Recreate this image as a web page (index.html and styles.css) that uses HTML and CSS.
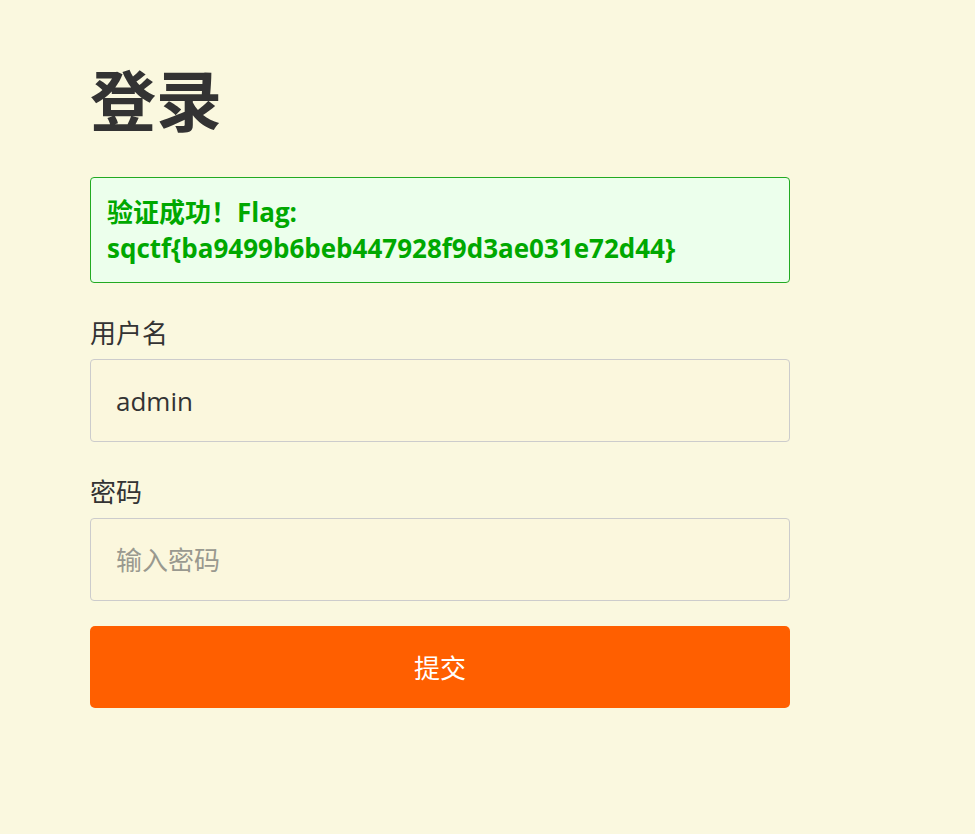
FILE: index.html
```html
<!DOCTYPE html>
<html lang="zh-CN">
<head>
<meta charset="utf-8">
<title>登录</title>
<link rel="stylesheet" href="styles.css">
</head>
<body>
<main class="container">
  <h1 class="title">登录</h1>
  <div class="alert-success">验证成功！Flag: sqctf{ba9499b6beb447928f9d3ae031e72d44}</div>
  <form class="login-form">
    <div class="form-group">
      <label class="form-label" for="username">用户名</label>
      <input class="form-input" id="username" type="text" value="admin">
    </div>
    <div class="form-group">
      <label class="form-label" for="password">密码</label>
      <input class="form-input" id="password" type="password" placeholder="输入密码">
    </div>
    <button class="submit-btn" type="button">提交</button>
  </form>
</main>
</body>
</html>
```

FILE: styles.css
```css
html, body {
  margin: 0;
  padding: 0;
  background: #faf8df;
}
body {
  font-family: "Open Sans", "Noto Sans CJK SC", sans-serif;
  color: #333333;
}
.container {
  width: 700px;
  padding: 62px 0 0 90px;
}
.title {
  margin: 0 0 38px 0;
  font-size: 66px;
  line-height: 77px;
  font-weight: 700;
  color: #333333;
}
.alert-success {
  box-sizing: border-box;
  width: 700px;
  border: 1px solid #22aa22;
  background: #ecffec;
  border-radius: 4px;
  padding: 16px 16px;
  color: #00a800;
  font-weight: 700;
  font-size: 26px;
  line-height: 36px;
}
.login-form {
  display: flex;
  flex-direction: column;
}
.form-group {
  display: flex;
  flex-direction: column;
  margin-top: 32px;
}
.form-label {
  font-size: 26px;
  line-height: 36px;
  margin-bottom: 8px;
  color: #333333;
}
.form-input {
  box-sizing: border-box;
  width: 700px;
  height: 83px;
  padding: 0 25px;
  border: 1px solid #cccccc;
  border-radius: 4px;
  background: #fbf7dd;
  font-family: "Open Sans", "Noto Sans CJK SC", sans-serif;
  font-size: 26px;
  color: #333333;
  outline: none;
}
.form-input::placeholder {
  color: #99998f;
}
.submit-btn {
  margin-top: 25px;
  width: 700px;
  height: 82px;
  border: none;
  border-radius: 5px;
  background: #ff5f00;
  color: #ffffff;
  font-family: "Open Sans", "Noto Sans CJK SC", sans-serif;
  font-size: 26px;
}
```
